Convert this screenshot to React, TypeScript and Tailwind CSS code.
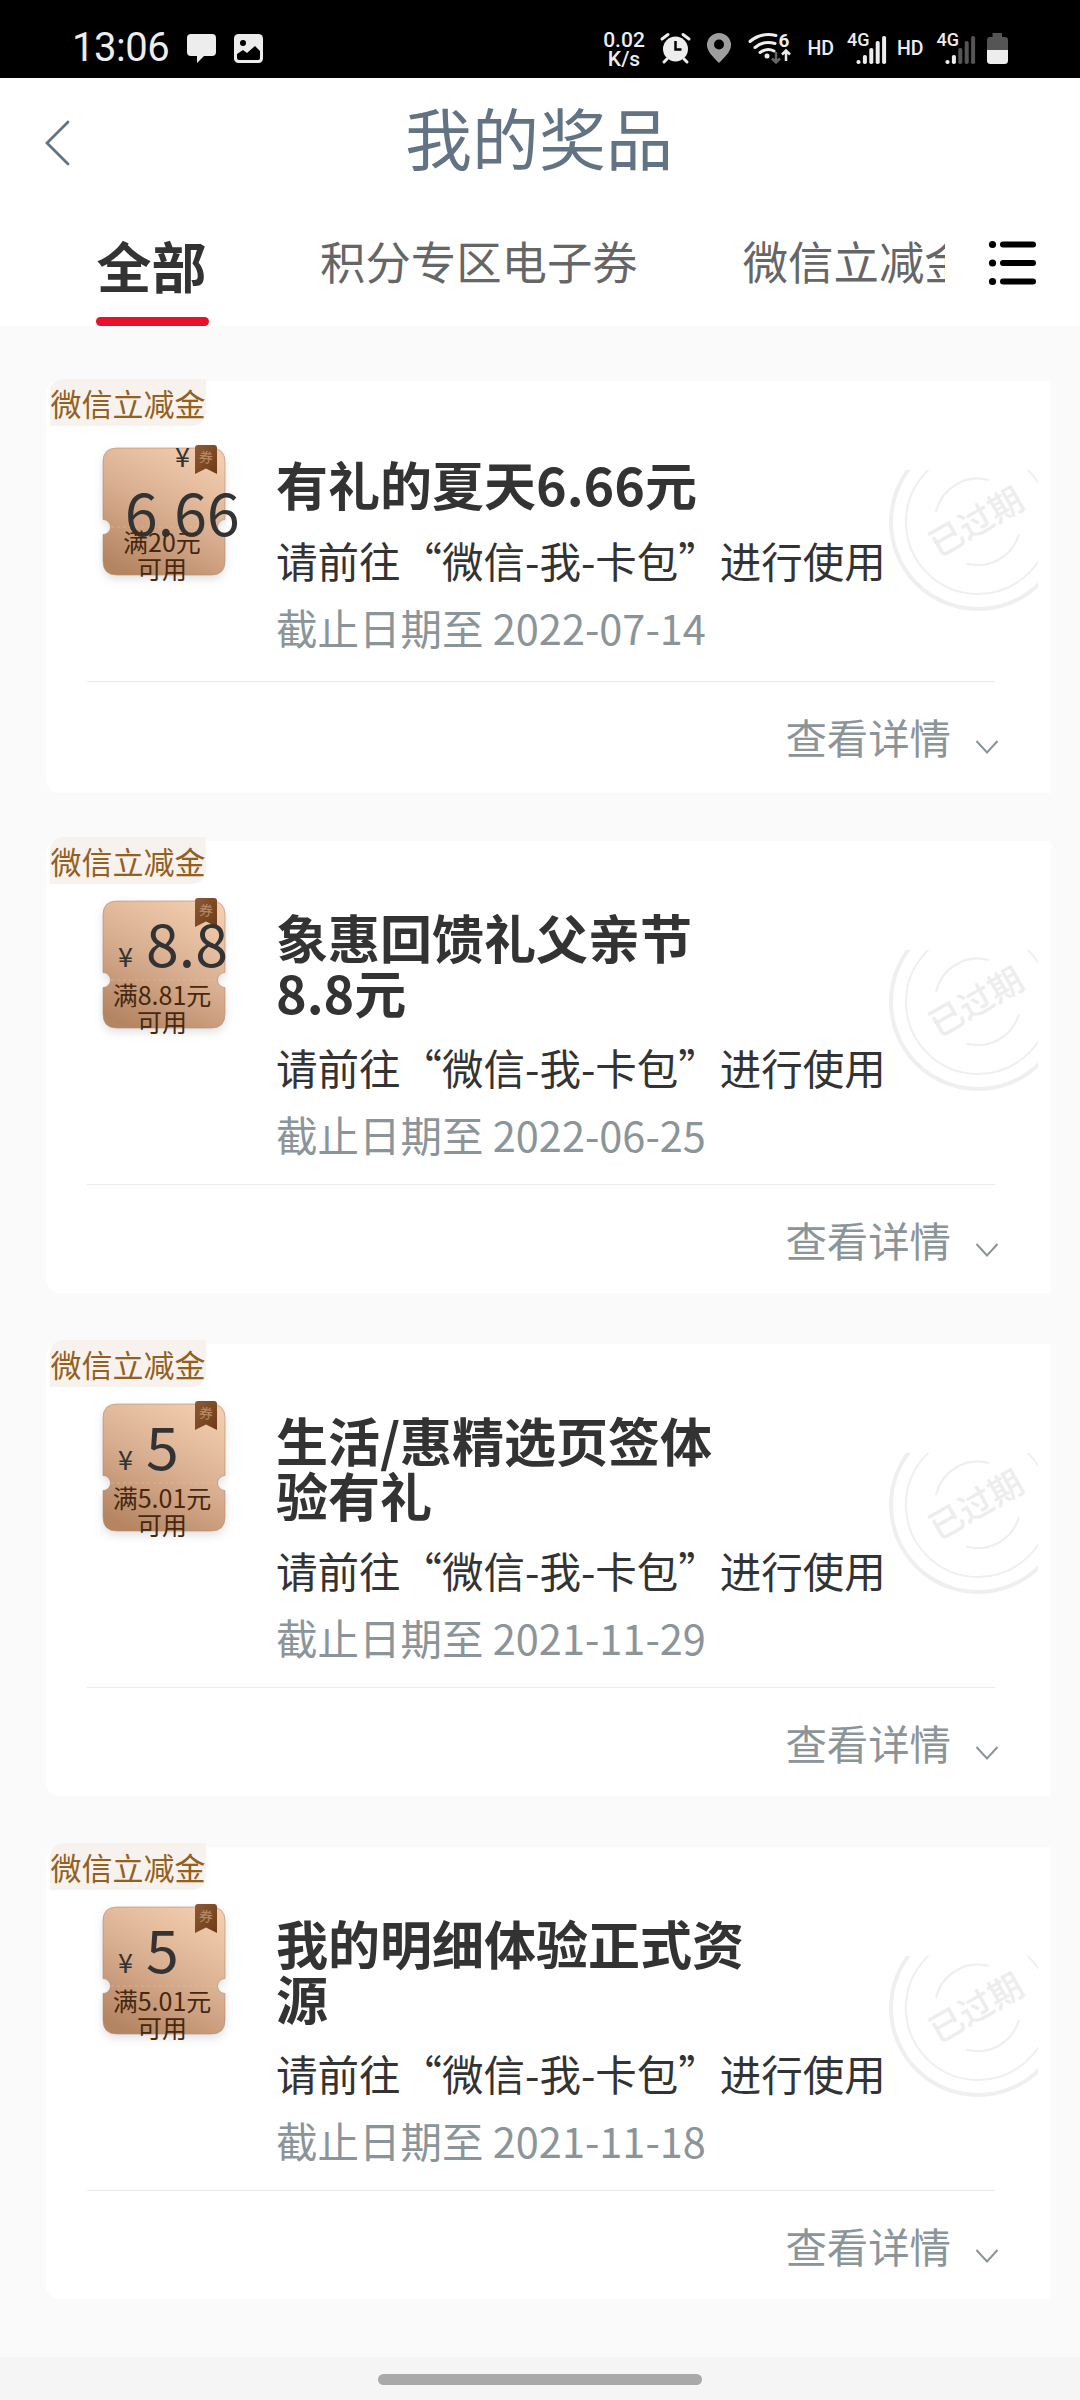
import clsx from 'clsx';

type Coupon = {
  title: string;
  amount: string;
  condition: string;
  expires: string;
  singleLine?: boolean;
};

const TABS = ['全部', '积分专区电子券', '微信立减金'];

const COUPONS: Coupon[] = [
  { title: '有礼的夏天6.66元', amount: '6.66', condition: '满20元', expires: '2022-07-14', singleLine: true },
  { title: '象惠回馈礼父亲节8.8元', amount: '8.8', condition: '满8.81元', expires: '2022-06-25' },
  { title: '生活/惠精选页签体验有礼', amount: '5', condition: '满5.01元', expires: '2021-11-29' },
  { title: '我的明细体验正式资源', amount: '5', condition: '满5.01元', expires: '2021-11-18' },
];

function SignalBars({ x, active }: { x: number; active: number }) {
  const heights = [4, 9, 16, 23, 28];
  return (
    <g>
      {heights.map((h, i) => (
        <rect key={h} x={x + i * 6.4} y={64 - h} width="4" height={h} rx="1.8" fill={i < active ? '#ededed' : '#555'} />
      ))}
    </g>
  );
}

function StatusBar() {
  return (
    <div className="flex h-[78px] shrink-0 items-start justify-between bg-black font-[Roboto,sans-serif] text-[#ededed]">
      <div className="flex pl-[72px]">
        <span className="w-[115px] pt-[24px] text-[40px] leading-[48px] tracking-[-0.5px]">13:06</span>
        <svg width="80" height="78" viewBox="187 0 80 78" fill="none">
          <path
            d="M191 34h21q4 0 4 4v14q0 4-4 4h-8l-7 7v-7h-6q-4 0-4-4V38q0-4 4-4z"
            fill="#ededed"
          />
          <rect x="234" y="34" width="29" height="29" rx="4.5" fill="#ededed" />
          <circle cx="243" cy="43" r="3" fill="#000" />
          <path d="M237 54l6-4 4 3 8-7 5 5v7q0 2-2 2h-19q-2 0-2-2z" fill="#000" />
        </svg>
      </div>

      <svg width="480" height="78" viewBox="600 0 480 78" fill="none" fontFamily="Roboto, sans-serif" fontWeight="500">
        <text x="624" y="46.500" fontSize="21" textAnchor="middle" fill="#ededed">0.02</text>
        <text x="624" y="65.500" fontSize="21" textAnchor="middle" fill="#ededed">K/s</text>

        <circle cx="675.500" cy="49" r="12.500" fill="#ededed" />
        <path d="M662 39l6-4.500M689 39l-6-4.500M667 59l-3 3M684 59l3 3" stroke="#ededed" strokeWidth="3" strokeLinecap="round" />
        <path d="M675.500 41v8.500h6" stroke="#000" strokeWidth="2.500" />

        <path
          fillRule="evenodd"
          d="M719 63C712 56 707 51 707 45a12 12 0 0 1 24 0c0 6-5 11-12 18zM719 39.500a5 5 0 1 0 0 10 5 5 0 0 0 0-10z"
          fill="#9e9e9e"
        />

        <g stroke="#ededed" strokeWidth="3" strokeLinecap="round">
          <path d="M750 41.500Q761 32 776 35.500" />
          <path d="M755 47.500Q764 40 775 43.500" />
          <path d="M760 52.500Q767 47.500 774 51" />
        </g>
        <circle cx="767" cy="56" r="2.500" fill="#ededed" />
        <text x="778.500" y="46.500" fontSize="19" fontWeight="700" fill="#ededed">6</text>
        <path d="M776 52v10M772 58.500l4 4 4-4" stroke="#666" strokeWidth="2.500" />
        <path d="M786 61V51M782 54.500l4-4 4 4" stroke="#ededed" strokeWidth="2.500" />

        <text x="807.500" y="54.500" fontSize="19.500" fill="#ededed">HD</text>
        <text x="847" y="45.500" fontSize="18" fill="#ededed">4G</text>
        <SignalBars x={856.5} active={5} />
        <text x="897" y="54.500" fontSize="19.500" fill="#ededed">HD</text>
        <text x="936.500" y="45.500" fontSize="18" fill="#ededed">4G</text>
        <SignalBars x={945.5} active={2} />

        <path d="M992.500 37v-4h9.500v4h3q3 0 3 3v10h-21V40q0-3 3-3z" fill="#555" />
        <path d="M987 50h21v10.500q0 3.500-3.500 3.500h-14q-3.500 0-3.500-3.500z" fill="#ededed" />
      </svg>
    </div>
  );
}

function Header() {
  return (
    <header className="flex h-[134px] shrink-0 items-start bg-white">
      <svg className="mt-[42px] ml-[43px]" width="28" height="46" viewBox="0 0 28 46" fill="none">
        <path d="M25 2L4 23l21 21" stroke="#5f7485" strokeWidth="2.800" strokeLinecap="round" />
      </svg>
      <h1 className="mr-[73px] flex-1 pt-[14px] text-center text-[67px] leading-[88px] text-[#627483]">我的奖品</h1>
    </header>
  );
}

function Tabs() {
  return (
    <nav className="flex h-[114px] shrink-0 items-start bg-white pl-24">
      <div className="flex w-[849px] items-start overflow-hidden whitespace-nowrap">
        {TABS.map((tab, i) =>
          i === 0 ? (
            <div key={tab} className="flex w-[113px] shrink-0 flex-col items-center">
              <span className="pt-[14px] pr-[2px] text-[55px] leading-[76px] font-bold text-[#333]">{tab}</span>
              <span className="mt-[15px] h-[9px] w-full rounded-full bg-[#e8102a]" />
            </div>
          ) : (
            <span
              key={tab}
              className={clsx(
                'shrink-0 pt-[20px] text-[45.400px] leading-[56px] text-[#666]',
                i === 1 ? 'ml-[111px]' : 'ml-[105px]',
              )}
            >
              {tab}
            </span>
          ),
        )}
      </div>
      <svg className="mt-[28px] ml-[43px]" width="50" height="46" viewBox="0 0 50 46" fill="#000">
        {[4.5, 23, 41.5].map((y) => (
          <g key={y}>
            <circle cx="4.500" cy={y} r="3.600" />
            <rect x="12" y={y - 3} width="36" height="6" rx="3" />
          </g>
        ))}
      </svg>
    </nav>
  );
}

function Ticket({ amount, condition, overflow }: { amount: string; condition: string; overflow?: boolean }) {
  return (
    <div className="relative h-[127px] w-[122px] shrink-0">
      <svg className="absolute -top-4 -left-4" width="154" height="166" viewBox="-16 -16 154 166">
        <defs>
          <linearGradient id="ticket" x1="0.75" y1="0" x2="0.25" y2="1">
            <stop offset="0" stopColor="#f2ccae" />
            <stop offset="0.5" stopColor="#d8ae90" />
            <stop offset="1" stopColor="#b58562" />
          </linearGradient>
          <linearGradient id="ribbon" x1="0" y1="0" x2="1" y2="1">
            <stop offset="0" stopColor="#8d5a37" />
            <stop offset="1" stopColor="#6d3a14" />
          </linearGradient>
          <filter id="ticketShadow" x="-20%" y="-20%" width="140%" height="140%">
            <feDropShadow dx="0" dy="4" stdDeviation="4" floodColor="#777" floodOpacity="0.22" />
          </filter>
        </defs>
        <path
          d="M14 0H108Q122 0 122 14V71.500A7.500 7.500 0 0 0 122 86.500V113Q122 127 108 127H14Q0 127 0 113V86.500A7.500 7.500 0 0 0 0 71.500V14Q0 0 14 0Z"
          fill="url(#ticket)"
          stroke="#b08a70"
          strokeOpacity="0.6"
          filter="url(#ticketShadow)"
        />
        <path d="M8 79H114" stroke="#e6c4aa" strokeOpacity="0.5" strokeDasharray="3 3" />
        <path d="M92 0Q92-3 95-3H111Q114-3 114 0V26L103 20.500 92 26Z" fill="url(#ribbon)" />
        <text x="103" y="14.500" fontSize="14" textAnchor="middle" fill="#b98d6c" transform="rotate(6 103 10)">券</text>
      </svg>
      <span
        className={clsx(
          'absolute text-[27px] leading-[28px] text-[#333]',
          overflow ? 'top-[-6px] left-[72px]' : 'top-[41px] left-[15px]',
        )}
      >
        ¥
      </span>
      <span
        className={clsx(
          'absolute text-[59px] leading-[60px] text-[#333]',
          overflow ? 'top-[33px] left-[22px]' : 'top-[11px] left-[43px]',
        )}
      >
        {amount}
      </span>
      <p className="absolute top-[80px] left-[-2px] w-full text-center text-[25px] leading-[27px] text-[#45280f]">
        {condition}
        <br />
        可用
      </p>
    </div>
  );
}

function ExpiredSeal({ className }: { className: string }) {
  return (
    <svg className={clsx('shrink-0', className)} width="149" height="142" viewBox="-89 -51 149 142" fill="none">
      <g stroke="#efefef">
        <circle r="87" cy="1" strokeWidth="4" />
        <circle r="72" cy="1" strokeWidth="2" />
        <path d="M-42-9A43 43 0 0 1 11-41M-12 42.500A43 43 0 0 0 41 13" strokeWidth="2.200" />
      </g>
      <text
        x="-2"
        y="12"
        fontSize="34"
        fontWeight="500"
        textAnchor="middle"
        fill="#ededed"
        transform="rotate(-30)"
      >
        已过期
      </text>
    </svg>
  );
}

function CouponCard({ coupon }: { coupon: Coupon }) {
  const { title, amount, condition, expires, singleLine } = coupon;
  return (
    <article
      className={clsx(
        'relative flex w-[1005px] flex-col rounded-l-[14px] bg-white',
        singleLine ? 'h-[412px] pt-[67px]' : 'h-[452px] pt-[60px]',
      )}
    >
      <span
        className={clsx(
          'absolute left-[4px] h-[47px] w-[156px] rounded-tl-[14px] rounded-br-[14px] bg-[#f7f2ee] text-center text-[31px] leading-[48px] whitespace-nowrap text-[#93601f]',
          singleLine ? 'top-[-2px]' : 'top-[-4px]',
        )}
      >
        微信立减金
      </span>

      <div className={clsx('flex items-start pl-[57px]', singleLine ? 'h-[233px]' : 'h-[283px]')}>
        <Ticket amount={amount} condition={condition} overflow={singleLine} />
        <div className="ml-[51px] w-[613px] shrink-0 pt-[8px]">
          <h2 className="w-[480px] text-[52px] leading-[55px] font-bold text-[#333]">{title}</h2>
          <p
            className={clsx(
              'text-[41.500px] leading-[66px] whitespace-nowrap text-[#333]',
              singleLine ? 'mt-[16px]' : 'mt-[15px]',
            )}
          >
            请前往“微信-我-卡包”进行使用
          </p>
          <p className="pt-px text-[41.500px] leading-[66px] whitespace-nowrap text-[#8b9599]">截止日期至 {expires}</p>
        </div>
        <ExpiredSeal className={singleLine ? 'mt-[22px]' : 'mt-[49px]'} />
      </div>

      <div className="mr-[56px] ml-[41px] h-px bg-[#ebebeb]" />

      <div className="mr-[52px] flex items-start justify-end pt-[23px]">
        <span className="text-[41.400px] leading-[62px] text-[#8b9599]">查看详情</span>
        <svg className="mt-[34px] ml-[24px]" width="24" height="16" viewBox="0 0 24 16" fill="none">
          <path d="M1.500 2L12 13.500 22.500 2" stroke="#8b9599" strokeWidth="2" />
        </svg>
      </div>
    </article>
  );
}

export default function App() {
  return (
    <div className="flex h-[2400px] w-[1080px] flex-col overflow-hidden bg-[#fafafa] font-['Noto_Sans_CJK_SC',sans-serif]">
      <StatusBar />
      <Header />
      <Tabs />
      <main className="flex flex-1 flex-col pt-[55px] pl-[46px]">
        {COUPONS.map((coupon, i) => (
          <div key={coupon.title} className={i === 1 ? 'pt-[48px]' : i > 1 ? 'pt-[51px]' : ''}>
            <CouponCard coupon={coupon} />
          </div>
        ))}
      </main>
      <footer className="flex h-[43px] shrink-0 justify-center bg-[#f5f5f5] pt-[17px]">
        <span className="h-[11px] w-[324px] rounded-full bg-[#a9a9a9]" />
      </footer>
    </div>
  );
}
